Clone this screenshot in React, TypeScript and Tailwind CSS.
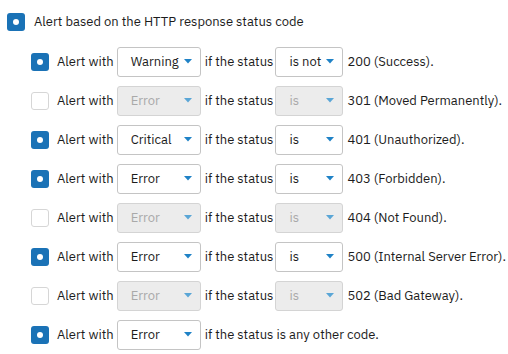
import React from 'react';

type Rule = {
  checked: boolean;
  level: string;
  op?: string;
  tail: string;
};

const rules: Rule[] = [
  { checked: true, level: 'Warning', op: 'is not', tail: '200 (Success).' },
  { checked: false, level: 'Error', op: 'is', tail: '301 (Moved Permanently).' },
  { checked: true, level: 'Critical', op: 'is', tail: '401 (Unauthorized).' },
  { checked: true, level: 'Error', op: 'is', tail: '403 (Forbidden).' },
  { checked: false, level: 'Error', op: 'is', tail: '404 (Not Found).' },
  { checked: true, level: 'Error', op: 'is', tail: '500 (Internal Server Error).' },
  { checked: false, level: 'Error', op: 'is', tail: '502 (Bad Gateway).' },
  { checked: true, level: 'Error', tail: 'if the status is any other code.' },
];

function Checkbox({ checked }: { checked: boolean }) {
  if (checked) {
    return (
      <span className="flex h-[18px] w-[18px] shrink-0 items-center justify-center rounded-[3px] bg-[#1a72b6]">
        <span className="h-[6px] w-[6px] rounded-full bg-white" />
      </span>
    );
  }
  return <span className="h-[18px] w-[18px] shrink-0 rounded-[3px] border border-[#d6d6d6] bg-white" />;
}

function Select({ value, width, disabled }: { value: string; width: string; disabled: boolean }) {
  return (
    <div
      className={`flex h-[30px] ${width} shrink-0 items-center justify-between rounded-[3px] border pl-[13px] pr-[8px] ${
        disabled ? 'border-[#d4d4d4] bg-[#ececec] text-[#a9a9a9]' : 'border-[#c4c4c4] bg-white text-[#1c1c1c]'
      }`}
    >
      <span>{value}</span>
      <svg width="8" height="5" viewBox="0 0 8 5">
        <path d="M0 0h8L4 4.5z" fill={disabled ? '#5aa6d6' : '#1f82c6'} />
      </svg>
    </div>
  );
}

export default function App() {
  return (
    <div
      className="min-h-[354px] w-[508px] whitespace-nowrap bg-white text-[13px] text-[#1c1c1c]"
      style={{ fontFamily: '"IBM Plex Sans", Roboto, sans-serif' }}
    >
      <div className="flex items-center gap-[9px] pl-[7px] pt-[12px]">
        <Checkbox checked />
        <span>Alert based on the HTTP response status code</span>
      </div>
      <div className="mt-[15px] flex flex-col gap-[9px] pl-[31px]">
        {rules.map((r, i) => (
          <div key={i} className="flex h-[30px] items-center">
            <Checkbox checked={r.checked} />
            <span className="ml-[8px] shrink-0">Alert with</span>
            <span className="ml-[3px] shrink-0">
              <Select value={r.level} width="w-[84px]" disabled={!r.checked} />
            </span>
            {r.op ? (
              <>
                <span className="ml-[4px] shrink-0">if the status</span>
                <span className="ml-[2px] shrink-0">
                  <Select value={r.op} width="w-[68px]" disabled={!r.checked} />
                </span>
                <span className="ml-[4px] shrink-0">{r.tail}</span>
              </>
            ) : (
              <span className="ml-[4px] shrink-0">{r.tail}</span>
            )}
          </div>
        ))}
      </div>
    </div>
  );
}
